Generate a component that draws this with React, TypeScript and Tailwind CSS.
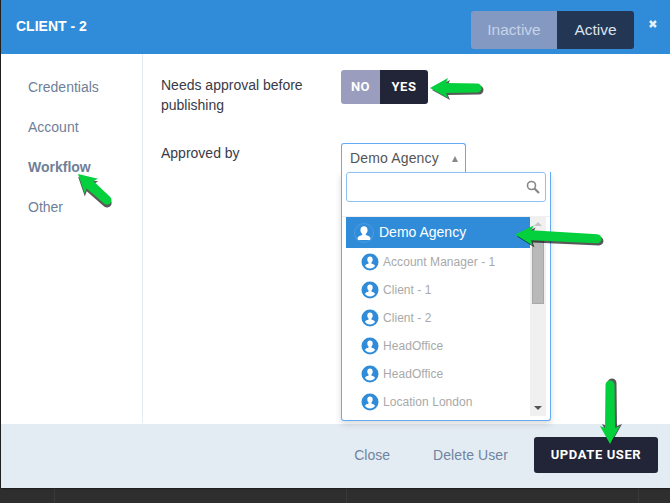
import React from 'react';

const sans = { fontFamily: '"Liberation Sans", Arial, sans-serif' };

const UserIcon = ({ selected }: { selected?: boolean }) => (
  <svg width={selected ? 20 : 18} height={selected ? 20 : 18} viewBox="0 0 18 18" className="shrink-0">
    {selected ? (
      <>
        <circle cx="9" cy="9" r="8.5" fill="none" stroke="#4a9ae0" strokeWidth="1" />
        <path d="M9 3c-2 0-3.2 1.5-3.2 3.4 0 1.5.6 2.7 1.6 3.4v.9c-1.8.5-3.6 1.2-4.1 2.3v1.7c0 .4.3.7.7.7h10c.4 0 .7-.3.7-.7v-1.7c-.5-1.1-2.3-1.8-4.1-2.3v-.9c1-.7 1.6-1.9 1.6-3.4C12.200 4.500 11 3 9 3z" fill="#fff" />
      </>
    ) : (
      <>
        <circle cx="9" cy="9" r="8.5" fill="#308cd8" />
        <path d="M9 3.600c-1.700 0-2.700 1.300-2.700 2.900 0 1.300.5 2.300 1.300 3v.9c-1.600.5-3 1.100-3.500 2v.6c.9 1.400 2.900 2.400 4.900 2.400s4-1 4.900-2.400v-.6c-.5-.9-1.900-1.500-3.500-2v-.9c.8-.7 1.300-1.700 1.300-3 0-1.600-1-2.900-2.700-2.900z" fill="#fff" />
      </>
    )}
  </svg>
);

// green annotation arrow, drawn pointing left, rotated per use
const Arrow = ({ length, className }: { length: number; className: string }) => {
  const d = `M0 15 L18 5 L16 10 L${length - 5} 10.500 A4.500 4.500 0 0 1 ${length - 5} 19.500 L16 20 L18 25 Z`;
  return (
    <svg width={length + 8} height="34" viewBox={`0 0 ${length + 8} 34`} className={`absolute pointer-events-none ${className}`}>
      <path d={d} fill="#000" opacity="0.65" transform="translate(2 2)" />
      <path d={d} fill="#04cf3c" />
    </svg>
  );
};

const people = ['Account Manager - 1', 'Client - 1', 'Client - 2', 'HeadOffice', 'HeadOffice', 'Location London'];

export default function App() {
  return (
    <div className="h-[503px] w-[670px] overflow-hidden bg-[#2e2e2e] relative" style={sans}>
      <div className="relative z-10 ml-px flex h-[488px] flex-col bg-white shadow-[0_0_2px_#000]">
        <header className="flex h-[54px] shrink-0 items-start justify-between bg-[#308cd8] pl-[15px] pr-[13px]">
          <h1 className="mt-[18px] text-[14px] leading-[16px] font-bold text-white">CLIENT - 2</h1>
          <div className="flex items-start">
            <div className="mt-[11px] flex h-[38px] overflow-hidden rounded-[3px] text-[15.500px]">
              <span className="flex w-[86px] items-center justify-center bg-[#8499c2] text-[#c6d3e8]">Inactive</span>
              <span className="flex w-[77px] items-center justify-center bg-[#233654] text-[#dbe3ee]">Active</span>
            </div>
            <svg width="8" height="8" viewBox="0 0 8 8" className="ml-[15px] mt-[20px]" stroke="#e4effa" strokeWidth="2.500">
              <path d="M1 1 L7 7 M7 1 L1 7" />
            </svg>
          </div>
        </header>
        <div className="flex min-h-0 flex-1">
          <nav className="flex h-[369px] w-[142px] shrink-0 flex-col gap-[22px] border-r border-[#e4ecf3] pl-[27px] pt-[24px] text-[14px] leading-[18px] text-[#6f7f99]">
            <span>Credentials</span>
            <span>Account</span>
            <span className="font-bold">Workflow</span>
            <span>Other</span>
          </nav>
          <div className="flex-1 pl-[18px] pt-[21px] text-[14px] leading-[20px] text-[#3a3a45]">
            <div className="flex">
              <p className="w-[180px]">Needs approval before publishing</p>
              <div className="-mt-[5px] flex h-[34px] overflow-hidden rounded-[3px] text-[13px] font-bold tracking-[0.5px]" style={{ fontFamily: '"Roboto", sans-serif' }}>
                <span className="flex w-[39px] items-center justify-center bg-[#9a9dbd] text-white">NO</span>
                <span className="flex w-[48px] items-center justify-center bg-[#222437] text-white">YES</span>
              </div>
            </div>
            <p className="mt-[28px]">Approved by</p>
          </div>
        </div>
        <footer className="flex h-[64px] shrink-0 items-center justify-end bg-[#e4ecf3] pb-[2px] pr-[12px] text-[14px] text-[#6f84a0]">
          <span className="mr-[43px]">Close</span>
          <span className="mr-[26px] tracking-[0.1px]">Delete User</span>
          <span className="flex h-[36px] w-[124px] items-center justify-center rounded-[3px] bg-[#222437] text-[13px] font-bold tracking-[0.6px] text-white" style={{ fontFamily: '"Roboto", sans-serif' }}>UPDATE USER</span>
        </footer>
      </div>

      {/* page behind the dialog */}
      <div className="flex h-[15px]">
        <div className="h-full w-[55px] border-r border-[#3a3a3a] border-b-0" />
        <div className="h-full w-[292px] border-r border-[#3a3a3a]" />
        <div className="h-full w-[292px] border-r border-[#3a3a3a]" />
      </div>

      {/* select opened over the form */}
      <div className="absolute z-20 left-[341px] top-[143px] flex h-[30px] w-[125px] items-center justify-between rounded-t-[3px] border border-b-0 border-[#66aaf5] bg-white pl-[8px] pr-[7px] text-[14px] tracking-[0.15px] text-[#555]">
        <span>Demo Agency</span>
        <span className="h-0 w-0 border-x-[3.500px] border-b-[6px] border-x-transparent border-b-[#888]" />
      </div>
      <div className="absolute z-20 left-[341px] top-[172px] h-[249px] w-[210px] rounded-b-[3px] border border-t-0 border-[#66aaf5] bg-white shadow-[0_3px_6px_rgba(0,0,0,0.15)]">
        <div className="absolute left-[4px] top-0 flex h-[30px] w-[200px] items-center justify-end rounded-[3px] border border-[#8fc0f5] bg-white pr-[5px]">
          <svg width="14" height="14" viewBox="0 0 14 14" fill="none" stroke="#888" strokeWidth="1.600">
            <circle cx="5.500" cy="5.500" r="4" />
            <path d="M8.500 8.500 L13 13" strokeWidth="2.200" />
          </svg>
        </div>
        <div className="absolute left-0 right-0 top-[44px] h-px bg-[#eeeeee]" />
        <ul className="absolute left-[4px] top-[45px] w-[184px]">
          <li className="flex h-[31px] items-center gap-[5px] bg-[#308cd8] pl-[8px] text-[14px] text-white">
            <UserIcon selected />
            <span>Demo Agency</span>
          </li>
          {people.map((name, i) => (
            <li key={i} className="flex h-[28px] items-center gap-[4px] pb-px pl-[15px] text-[12px] tracking-[0.05px] text-[#a9a9a9]">
              <UserIcon />
              <span>{name}</span>
            </li>
          ))}
        </ul>
        <div className="absolute left-[188px] top-[44px] flex h-[200px] w-[16px] flex-col items-center bg-[#f0f0f0]">
          <span className="mt-[6px] h-0 w-0 border-x-[4px] border-b-[4px] border-x-transparent border-b-[#c4c4c4]" />
          <span className="mt-[6px] h-[72px] w-[12px] border border-[#a8a8a8] bg-[#b9b9b9]" />
          <span className="mt-auto mb-[6px] h-0 w-0 border-x-[4px] border-t-[4px] border-x-transparent border-t-[#555]" />
        </div>
      </div>

      {/* annotation arrows */}
      <Arrow length={52} className="z-30 left-[430px] top-[73px]" />
      <Arrow length={87} className="z-30 left-[515px] top-[222px] rotate-[3deg]" />
      <Arrow length={44} className="z-30 left-[70px] top-[176px] rotate-[42deg]" />
      <Arrow length={64} className="z-30 left-[576px] top-[391px] -rotate-90" />
    </div>
  );
}
